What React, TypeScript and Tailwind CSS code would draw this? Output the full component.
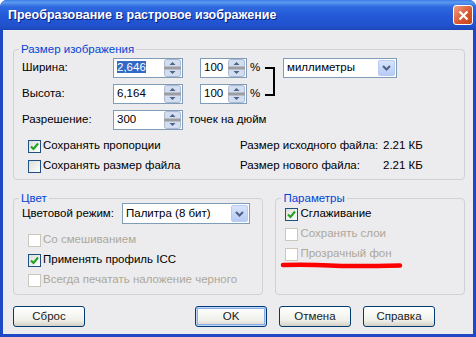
import React from 'react';

function Spin() {
  return (
    <svg width="17" height="18" viewBox="0 0 17 18" className="shrink-0">
      <rect x="0.5" y="0.5" width="16" height="8" rx="2" fill="#d3ddf0" stroke="#aab8d2" />
      <rect x="0.5" y="9.5" width="16" height="8" rx="2" fill="#d3ddf0" stroke="#aab8d2" />
      <rect x="0" y="7.5" width="17" height="3" fill="#9d9da2" />
      <path d="M5.5 6 L8.5 3 L11.5 6 Z" fill="#4d6185" />
      <path d="M5.5 12 L8.5 15 L11.5 12 Z" fill="#4d6185" />
    </svg>
  );
}

function NumField({ value, width, selected }: { value: string; width: string; selected?: boolean }) {
  return (
    <div className={`${width} h-[20px] border border-[#7f9db9] bg-white flex items-center pl-[3px] pr-[1px]`}>
      <div className="flex-1">
        <span className={selected ? 'bg-[#316ac5] text-white' : ''}>{value}</span>
      </div>
      <Spin />
    </div>
  );
}

function Combo({ value, width, height }: { value: string; width: string; height: string }) {
  return (
    <div className={`${width} ${height} border border-[#7f9db9] bg-white flex items-center pl-[3px] p-[1px]`}>
      <div className="flex-1 whitespace-nowrap">{value}</div>
      <div className="w-[17px] h-full rounded-[2px] border border-[#b9cbf3] bg-[linear-gradient(to_bottom,#d8e4fb,#b7cbf6)] flex items-center justify-center">
        <svg width="9" height="6" viewBox="0 0 9 6">
          <path d="M1 1 L4.5 4.5 L8 1" fill="none" stroke="#4d6185" strokeWidth="2" />
        </svg>
      </div>
    </div>
  );
}

function Check({ label, checked, disabled }: { label: string; checked?: boolean; disabled?: boolean }) {
  return (
    <div className="h-[20px] flex items-center whitespace-nowrap">
      <div
        className={`w-[13px] h-[13px] shrink-0 border flex items-center justify-center ${
          disabled ? 'border-[#cac8bb] bg-white' : 'border-[#1c5180] bg-[linear-gradient(135deg,#dcdcd7,#ffffff)]'
        }`}
      >
        {checked && (
          <svg width="9" height="9" viewBox="0 0 9 9">
            <path d="M1 4.5 L3.5 7 L8 1.5" fill="none" stroke="#21a121" strokeWidth="2" />
          </svg>
        )}
      </div>
      <span className={`ml-[2px] ${disabled ? 'text-[#aca899]' : 'text-black'}`}>{label}</span>
    </div>
  );
}

function Group({ label, className, children }: { label: string; className: string; children: React.ReactNode }) {
  return (
    <div className={`relative border border-[#d0d0d6] rounded-[4px] ${className}`}>
      <span className="absolute -top-[8px] left-[5px] px-[2px] bg-[#ecebee] leading-[14px] text-[#0046d5] whitespace-nowrap">
        {label}
      </span>
      {children}
    </div>
  );
}

function Btn({ label, isDefault }: { label: string; isDefault?: boolean }) {
  return (
    <button
      className={`w-[72px] h-[21px] rounded-[3px] border border-[#003c74] bg-[linear-gradient(to_bottom,#ffffff,#f0f0ea_70%,#d6d0c5)] ${
        isDefault ? 'shadow-[inset_0_0_0_1px_#bcd4f6,inset_0_0_0_2px_#89ade4]' : ''
      }`}
    >
      <span className="font-normal text-[#1a1a1a]">{label}</span>
    </button>
  );
}

export default function App() {
  return (
    <div className="w-[476px] h-[337px] bg-[#1d4ac4] rounded-t-[7px] flex flex-col font-['Liberation_Sans',Arial,sans-serif] text-[11.5px] text-black overflow-hidden">
      {/* Title bar */}
      <div className="h-[30px] shrink-0 flex items-center pl-[8px] pr-[3px] bg-[linear-gradient(to_bottom,#3c7fe6_0%,#5b9af0_8%,#2f6ae0_22%,#2358d6_55%,#2152cd_85%,#1c47b8_100%)]">
        <div className="flex-1 text-white font-bold text-[12.5px] [text-shadow:1px_1px_0_#0a1e80]">
          Преобразование в растровое изображение
        </div>
        <div className="w-[20px] h-[20px] rounded-[3px] border border-white bg-[linear-gradient(135deg,#f0a080,#d8532c_60%,#c2441c)] flex items-center justify-center">
          <svg width="11" height="11" viewBox="0 0 11 11">
            <path d="M1.5 1.5 L9.5 9.5 M9.5 1.5 L1.5 9.5" stroke="white" strokeWidth="2.2" />
          </svg>
        </div>
      </div>

      {/* Body */}
      <div className="flex-1 mx-[3px] mb-[3px] bg-[#ecebee] pl-[10px] pr-[8px] pt-[19px] flex flex-col">
        {/* Размер изображения */}
        <Group label="Размер изображения" className="pl-[8px] pr-[8px] pt-[8px] pb-[3px]">
          <div className="flex items-start">
            <div className="flex flex-col gap-[6px]">
              <div className="flex items-center">
                <span className="w-[91px]">Ширина:</span>
                <NumField value="2,646" width="w-[70px]" selected />
                <div className="ml-[17px]">
                  <NumField value="100" width="w-[47px]" />
                </div>
                <span className="w-[15px] ml-[3px]">%</span>
              </div>
              <div className="flex items-center">
                <span className="w-[91px]">Высота:</span>
                <NumField value="6,164" width="w-[70px]" />
                <div className="ml-[17px]">
                  <NumField value="100" width="w-[47px]" />
                </div>
                <span className="w-[15px] ml-[3px]">%</span>
              </div>
            </div>
            <div className="w-[10px] h-[29px] mt-[9px] border-t-2 border-r-2 border-b-2 border-black" />
            <div className="ml-[8px]">
              <Combo value="миллиметры" width="w-[114px]" height="h-[20px]" />
            </div>
          </div>
          <div className="mt-[6px] flex items-center">
            <span className="w-[91px]">Разрешение:</span>
            <NumField value="300" width="w-[70px]" />
            <span className="ml-[6px]">точек на дюйм</span>
          </div>
          <div className="mt-[6px] flex">
            <div className="w-[218px] pl-[6px] flex flex-col">
              <Check label="Сохранять пропорции" checked />
              <Check label="Сохранять размер файла" />
            </div>
            <div className="flex flex-col whitespace-nowrap">
              <div className="h-[20px] flex items-center">
                <span className="w-[143px]">Размер исходного файла:</span>
                <span>2.21 КБ</span>
              </div>
              <div className="h-[20px] flex items-center">
                <span className="w-[143px]">Размер нового файла:</span>
                <span>2.21 КБ</span>
              </div>
            </div>
          </div>
        </Group>

        {/* Lower groups */}
        <div className="mt-[18px] flex gap-[12px] items-stretch">
          <Group label="Цвет" className="w-[251px] pl-[8px] pt-[4px] pb-[4px]">
            <div className="flex items-center">
              <span className="w-[100px]">Цветовой режим:</span>
              <Combo value="Палитра (8 бит)" width="w-[128px]" height="h-[21px]" />
            </div>
            <div className="mt-[6px] pl-[6px] flex flex-col">
              <Check label="Со смешиванием" disabled />
              <Check label="Применять профиль ICC" checked />
              <Check label="Всегда печатать наложение черного" disabled />
            </div>
          </Group>

          <Group label="Параметры" className="w-[190px] pt-[5px]">
            <div className="relative pl-[9px] flex flex-col">
              <Check label="Сглаживание" checked />
              <Check label="Сохранять слои" disabled />
              <Check label="Прозрачный фон" disabled />
              <svg
                className="absolute left-[4px] top-[57px]"
                width="124"
                height="9"
                viewBox="0 0 124 9"
              >
                <path
                  d="M3 4 Q 30 3.5 50 4.5 T 120 4.5"
                  fill="none"
                  stroke="#ff0000"
                  strokeWidth="4.5"
                  strokeLinecap="round"
                />
              </svg>
            </div>
          </Group>
        </div>

        {/* Buttons */}
        <div className="mt-[11px] flex items-center">
          <Btn label="Сброс" />
          <div className="ml-[110px] flex gap-[12px]">
            <Btn label="OK" isDefault />
            <Btn label="Отмена" />
            <Btn label="Справка" />
          </div>
        </div>
      </div>
    </div>
  );
}
